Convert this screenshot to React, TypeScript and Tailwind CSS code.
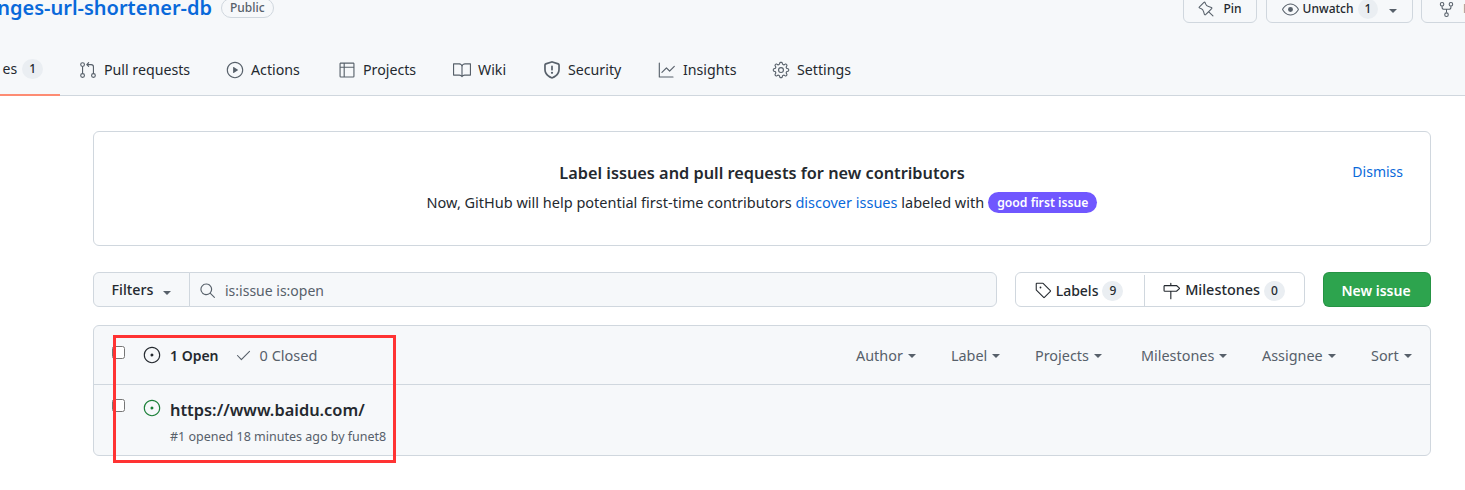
import React from "react";
import {
  GoBook,
  GoCheck,
  GoEye,
  GoGear,
  GoGitPullRequest,
  GoGraph,
  GoIssueOpened,
  GoMilestone,
  GoPin,
  GoPlay,
  GoRepoForked,
  GoSearch,
  GoTable,
  GoTag,
} from "react-icons/go";

const Caret = () => (
  <span className="ml-[5px] inline-block h-0 w-0 border-x-[4.5px] border-t-[4.5px] border-x-transparent border-t-current" />
);

// octicons shield with the exclamation mark, the package one has a check in it
const ShieldAlert: React.FC<{ size?: number; className?: string }> = ({ size = 16, className }) => (
  <svg width={size} height={size} viewBox="0 0 16 16" fill="currentColor" className={className}>
    <path d="M7.467.133a1.748 1.748 0 0 1 1.066 0l5.25 1.68A1.75 1.75 0 0 1 15 3.48V7c0 1.566-.32 3.182-1.303 4.682-.983 1.498-2.585 2.813-5.032 3.855a1.697 1.697 0 0 1-1.33 0c-2.447-1.042-4.049-2.357-5.032-3.855C1.32 10.182 1 8.566 1 7V3.48a1.75 1.75 0 0 1 1.217-1.667Zm.61 1.429a.25.25 0 0 0-.153 0l-5.25 1.68a.25.25 0 0 0-.174.238V7c0 1.358.275 2.666 1.057 3.86.784 1.194 2.121 2.34 4.366 3.297a.196.196 0 0 0 .154 0c2.245-.956 3.582-2.104 4.366-3.298C13.225 9.666 13.5 8.36 13.5 7V3.48a.251.251 0 0 0-.174-.237l-5.25-1.68ZM8.75 4.75v3a.75.75 0 0 1-1.5 0v-3a.75.75 0 0 1 1.5 0ZM9 10.5a1 1 0 1 1-2 0 1 1 0 0 1 2 0Z" />
  </svg>
);

const tabs = [
  { label: "Pull requests", icon: GoGitPullRequest, width: "w-[147px]" },
  { label: "Actions", icon: GoPlay, width: "w-[112px]" },
  { label: "Projects", icon: GoTable, width: "w-[115px]" },
  { label: "Wiki", icon: GoBook, width: "w-[90px]" },
  { label: "Security", icon: ShieldAlert, width: "w-[115px]" },
  { label: "Insights", icon: GoGraph, width: "w-[114px]" },
  { label: "Settings", icon: GoGear, width: "w-[100px]" },
];

const filters = [
  { label: "Author", width: "w-[95px]" },
  { label: "Label", width: "w-[84px]" },
  { label: "Projects", width: "w-[106px]" },
  { label: "Milestones", width: "w-[121px]" },
  { label: "Assignee", width: "w-[109px]" },
  { label: "Sort", width: "w-[41px]" },
];

const App: React.FC = () => {
  return (
    <div className="relative h-[490px] w-[1465px] overflow-hidden bg-white text-sm text-[#24292f] font-['Noto_Sans',sans-serif]">
      {/* repo header */}
      <div className="h-[96px] border-b border-[#d0d7de] bg-[#f6f8fa]">
        <div className="flex h-[48px] items-start justify-between">
          <div className="-mt-[6px] flex items-center">
            <div className="flex w-[212px] justify-end whitespace-nowrap">
              <span className="text-xl font-semibold text-[#0969da]">nges-url-shortener-db</span>
            </div>
            <span className="ml-[9px] rounded-full border border-[#d0d7de] px-2 text-xs font-medium leading-[18px] text-[#57606a]">
              Public
            </span>
          </div>
          <div className="-mt-[8px] flex gap-2 text-xs font-medium">
            <div className="mr-px flex h-[31px] w-[74px] items-center justify-center gap-2 rounded-md border border-[#d0d7de] bg-[#f6f8fa] pt-[3px]">
              <GoPin size={17} className="text-[#57606a]" />
              Pin
            </div>
            <div className="flex h-[31px] w-[147px] items-center justify-center rounded-md border border-[#d0d7de] bg-[#f6f8fa] pt-[3px]">
              <GoEye size={17} className="mr-1 text-[#57606a]" />
              Unwatch
              <span className="ml-1 rounded-full bg-[#eaeef2] px-[7px] leading-[20px]">1</span>
              <span className="ml-[6px] text-[#57606a]">
                <Caret />
              </span>
            </div>
            <div className="-mr-[30px] flex h-[31px] w-[74px] items-center gap-2 rounded-md border border-[#d0d7de] bg-[#f6f8fa] pl-4 pt-[3px] text-[#8c959f]">
              <GoRepoForked size={17} className="text-[#57606a]" />F
            </div>
          </div>
        </div>
        <div className="flex h-[48px]">
          <div className="relative flex w-[60px] items-start justify-end pr-[17px] pt-[11px]">
            <span>es</span>
            <span className="ml-[5px] rounded-full bg-[#eaeef2] px-[7px] text-xs font-medium leading-[20px]">1</span>
            <span className="absolute bottom-0 left-0 h-[2px] w-full bg-[#fd8c73]" />
          </div>
          <div className="ml-[19px] flex text-[14.2px]">
            {tabs.map((tab) => {
              const Icon = tab.icon;
              return (
                <div key={tab.label} className={`flex items-start gap-[7px] pt-[12px] ${tab.width}`}>
                  <Icon size={18} className="mt-[1px] shrink-0 text-[#57606a]" />
                  <span>{tab.label}</span>
                </div>
              );
            })}
          </div>
        </div>
      </div>

      <div className="ml-[93px] w-[1338px]">
        {/* first-time contributors banner */}
        <div className="relative mt-[35px] h-[115px] rounded-md border border-[#d0d7de] pt-[27px] text-center">
          <h2 className="text-[16.3px] font-semibold leading-[28px]">Label issues and pull requests for new contributors</h2>
          <p className="mt-[3px] flex items-center justify-center text-[14.5px] leading-[24px]">
            Now, GitHub will help potential first-time contributors&nbsp;
            <span className="text-[#0969da]">discover issues</span>&nbsp;labeled with
            <span className="ml-[4px] rounded-full bg-[#7057ff] px-[9px] text-[12.2px] font-semibold leading-[21px] text-white">
              good first issue
            </span>
          </p>
          <span className="absolute right-[27px] top-[30px] text-[#0969da]">Dismiss</span>
        </div>

        {/* search and actions */}
        <div className="mt-[26px] flex h-[35px]">
          <div className="flex w-[97px] items-center justify-center rounded-l-md border border-[#d0d7de] bg-[#f6f8fa] pt-[2px] text-[14.3px] font-medium">
            Filters
            <span className="ml-[5px] text-[#57606a]">
              <Caret />
            </span>
          </div>
          <div className="-ml-px flex w-[808px] items-center rounded-r-md border border-[#d0d7de] bg-[#f6f8fa] pl-[9px] pt-[2px] text-[#57606a]">
            <GoSearch size={17} className="mr-[9px]" />
            is:issue is:open
          </div>
          <div className="ml-[18px] flex w-[290px] rounded-md border border-[#d0d7de] pt-[2px] font-medium">
            <div className="flex w-[129px] items-center justify-center border-r border-[#d0d7de] pr-[2px]">
              <GoTag size={17} className="mr-1" />
              Labels
              <span className="ml-1 rounded-full bg-[#eaeef2] px-[7px] text-xs leading-[20px]">9</span>
            </div>
            <div className="flex flex-1 items-center justify-center pr-[2px] text-[14.4px]">
              <GoMilestone size={18} className="mr-[5px]" />
              Milestones
              <span className="ml-1 rounded-full bg-[#eaeef2] px-[7px] text-xs leading-[20px]">0</span>
            </div>
          </div>
          <div className="ml-[18px] flex flex-1 items-center justify-center rounded-md border border-[#1f883d]/60 bg-[#2da44e] pr-[2px] pt-[2px] font-semibold text-white">
            New issue
          </div>
        </div>

        {/* issue list */}
        <div className="mt-[18px] h-[131px] rounded-md border border-[#d0d7de] bg-[#f6f8fa]">
          <div className="flex h-[59px] items-center border-b border-[#d0d7de] pl-[19px] pr-[18px]">
            <input type="checkbox" className="-ml-px -mt-[5px] h-[13px] w-[13px]" />
            <GoIssueOpened size={18} className="ml-[18px] text-[#24292f]" />
            <span className="ml-[9px] pt-px font-semibold">1 Open</span>
            <GoCheck size={17} className="ml-4 text-[#57606a]" />
            <span className="ml-[8px] pt-px text-[14.5px] text-[#57606a]">0 Closed</span>
            <div className="ml-auto flex pt-[2px] text-[14.4px] text-[#57606a]">
              {filters.map((f) => (
                <span key={f.label} className={`flex items-center ${f.width}`}>
                  {f.label}
                  <Caret />
                </span>
              ))}
            </div>
          </div>
          <div className="flex items-start pl-[19px] pt-[14px]">
            <input type="checkbox" className="-ml-px h-[13px] w-[13px]" />
            <GoIssueOpened size={18} className="ml-[18px] text-[#1a7f37]" />
            <div className="ml-[9px]">
              <div className="pt-px text-[16.4px] font-semibold leading-[20px]">https://www.baidu.com/</div>
              <div className="mt-[8px] text-[12.5px] leading-[18px] text-[#57606a]">#1 opened 18 minutes ago by funet8</div>
            </div>
          </div>
        </div>
      </div>

      {/* annotation drawn on top of the screenshot */}
      <div className="absolute left-[113px] top-[335px] h-[128px] w-[283px] border-[3px] border-[#f33]" />
    </div>
  );
};

export default App;
